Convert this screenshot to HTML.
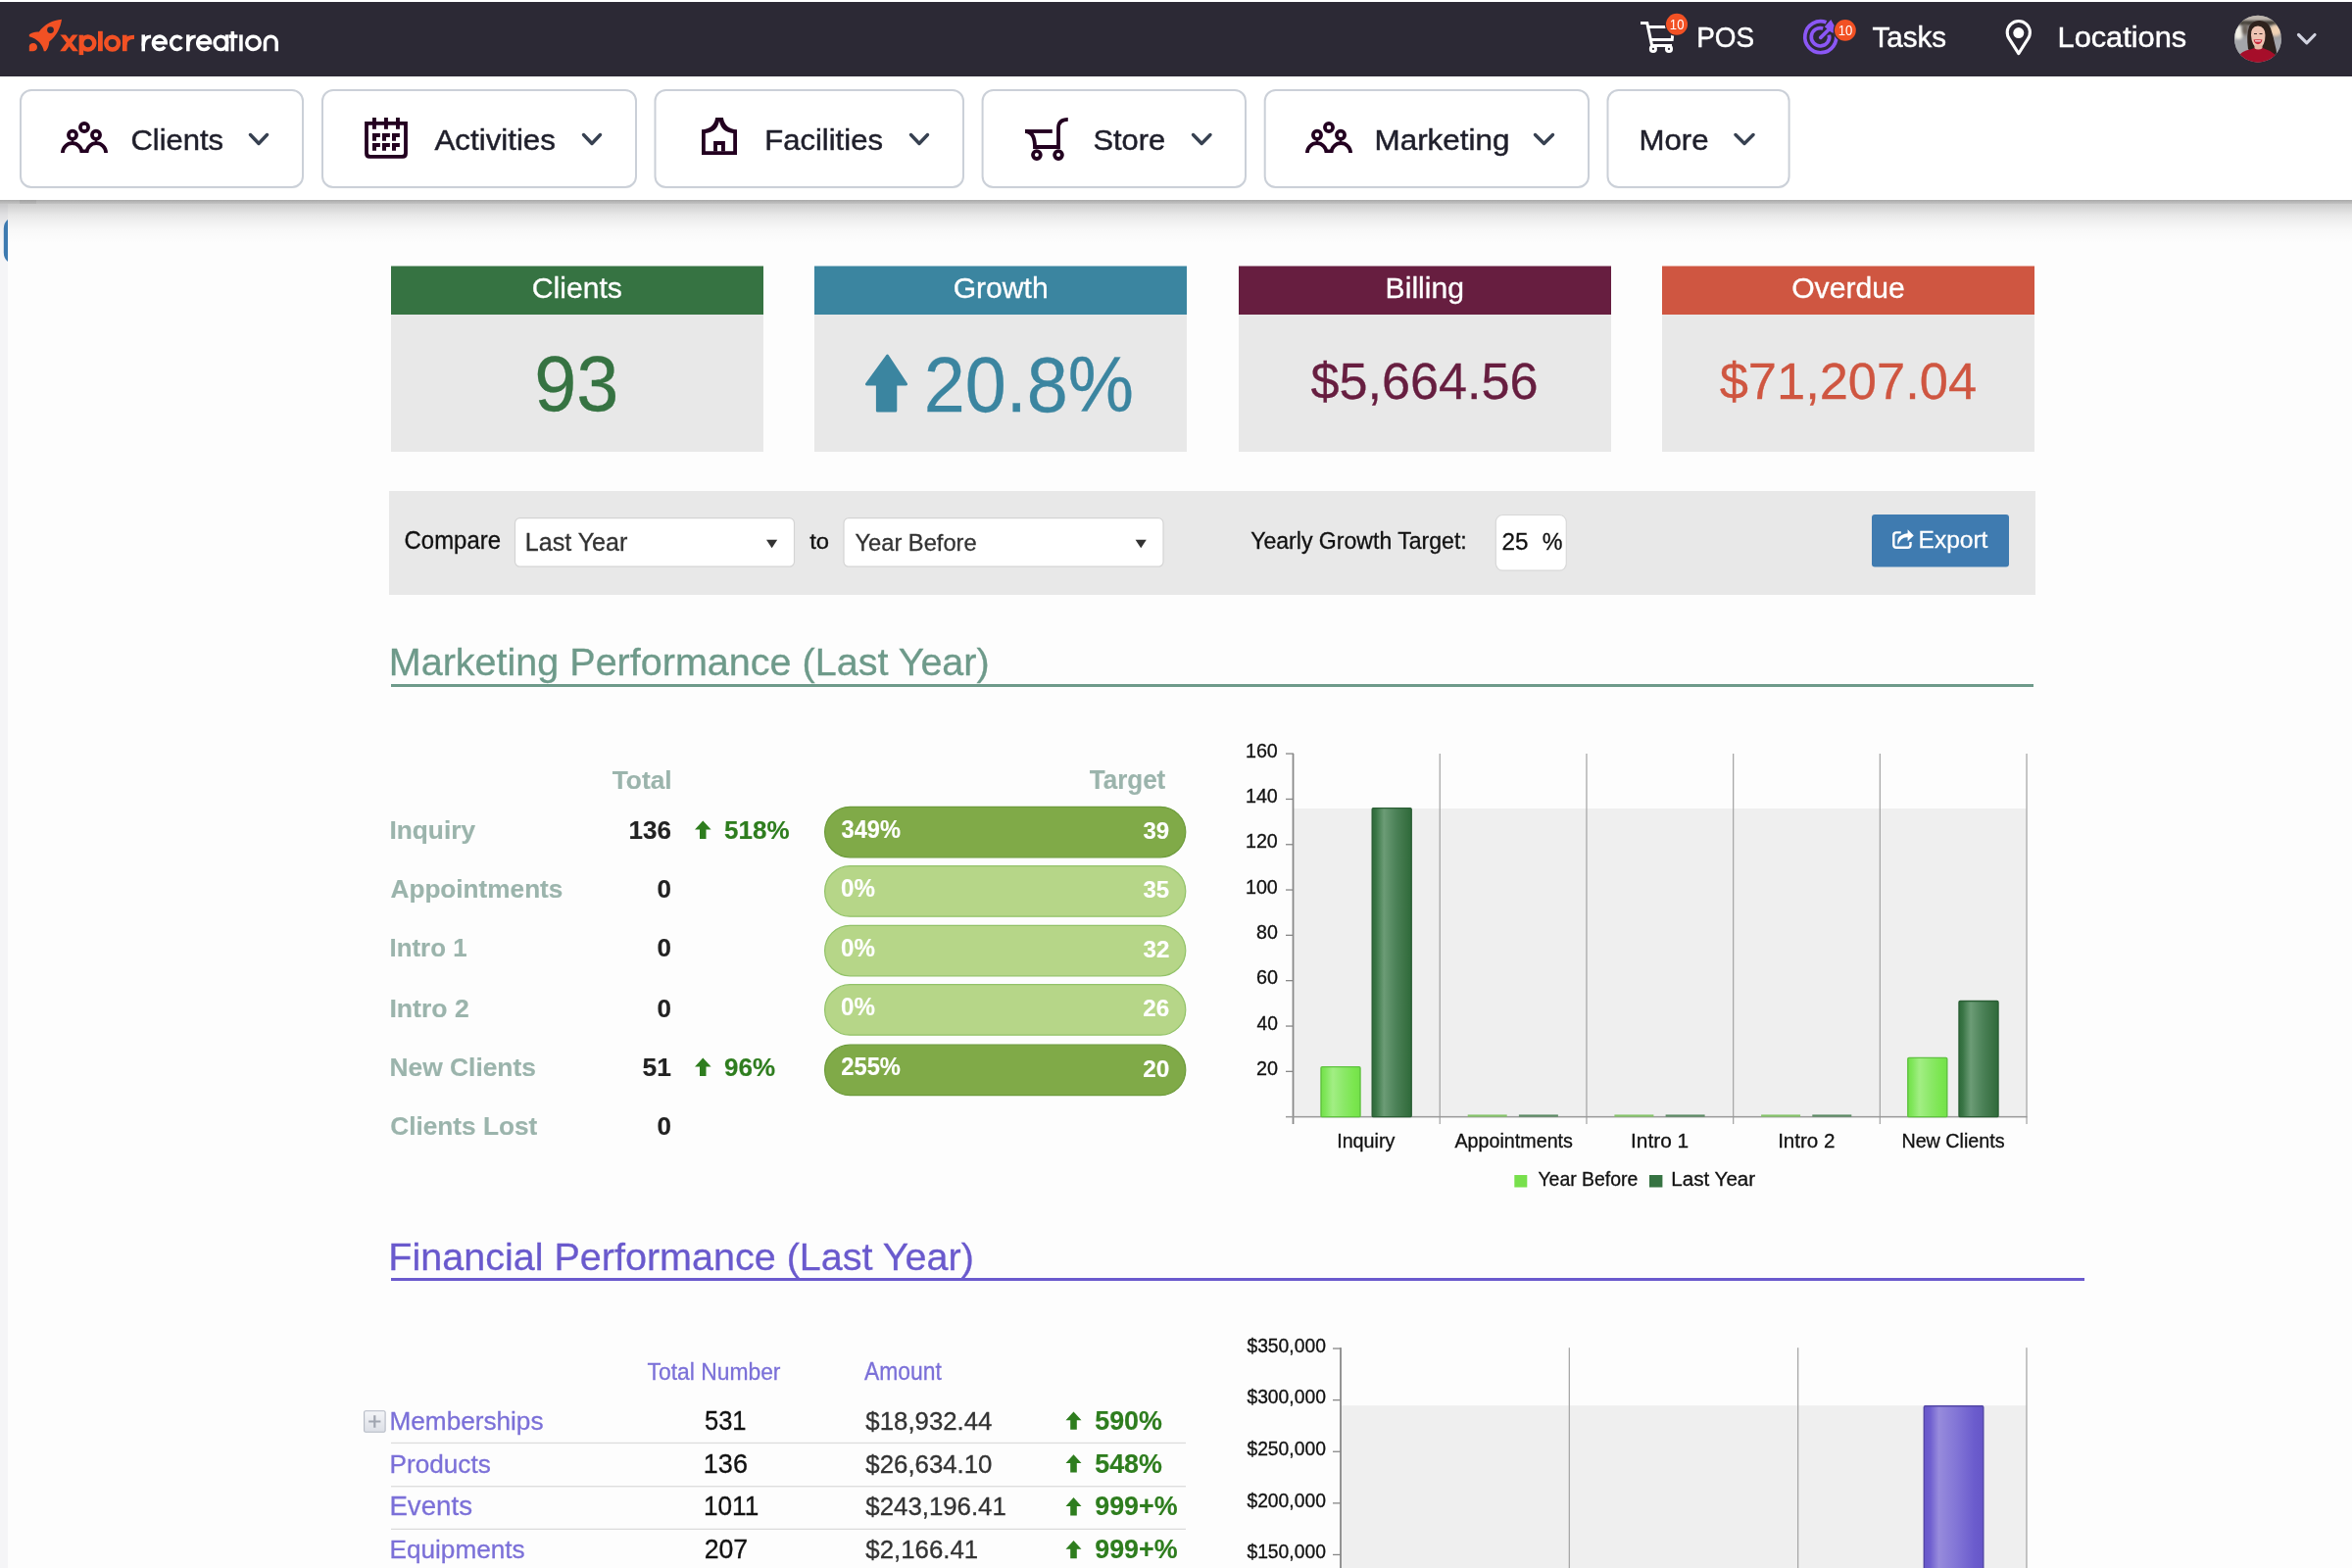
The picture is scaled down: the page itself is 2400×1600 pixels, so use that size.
<!DOCTYPE html>
<html><head><meta charset='utf-8'><title>Xplor Recreation Dashboard</title>
<style>html,body{margin:0;padding:0;width:2400px;height:1600px;overflow:hidden;background:#fdfdfd;font-family:"Liberation Sans",sans-serif}</style>
</head><body>
<svg width='2400' height='1600' viewBox='0 0 2400 1600' style='position:absolute;left:0;top:0;display:block;will-change:transform'><defs>
<linearGradient id='shadowTop' x1='0' y1='0' x2='0' y2='1'><stop offset='0' stop-color='#000' stop-opacity='0.19'/><stop offset='0.3' stop-color='#000' stop-opacity='0.08'/><stop offset='0.65' stop-color='#000' stop-opacity='0.02'/><stop offset='1' stop-color='#000' stop-opacity='0'/></linearGradient><linearGradient id='gLine' x1='0' y1='0' x2='0' y2='1'><stop offset='0' stop-color='#a9a9a9'/><stop offset='1' stop-color='#c2c2c2'/></linearGradient>
<linearGradient id='gLight' x1='0' y1='0' x2='1' y2='0'><stop offset='0' stop-color='#74e04a'/><stop offset='0.1' stop-color='#7ee658'/><stop offset='0.3' stop-color='#a2ee84'/><stop offset='0.6' stop-color='#8ae866'/><stop offset='0.85' stop-color='#7ae64e'/><stop offset='1' stop-color='#74e04a'/></linearGradient>
<linearGradient id='gDark' x1='0' y1='0' x2='1' y2='0'><stop offset='0' stop-color='#2e6a3a'/><stop offset='0.1' stop-color='#3a7646'/><stop offset='0.3' stop-color='#6c9c76'/><stop offset='0.6' stop-color='#4c8258'/><stop offset='0.85' stop-color='#3a7244'/><stop offset='1' stop-color='#2e6a3a'/></linearGradient>
<linearGradient id='gPurple' x1='0' y1='0' x2='1' y2='0'><stop offset='0' stop-color='#6656c8'/><stop offset='0.1' stop-color='#6e5ecf'/><stop offset='0.25' stop-color='#978bdc'/><stop offset='0.55' stop-color='#8275d6'/><stop offset='0.85' stop-color='#6b5ccd'/><stop offset='1' stop-color='#6656c8'/></linearGradient>
<linearGradient id='gExp' x1='0' y1='0' x2='0' y2='1'><stop offset='0' stop-color='#f4f5f8'/><stop offset='1' stop-color='#dcdfe6'/></linearGradient>
<clipPath id='avClip'><circle cx='2304' cy='39.7' r='24'/></clipPath>
<filter id='blur2'><feGaussianBlur stdDeviation='2'/></filter><filter id='blur1' x='-50%' y='-50%' width='200%' height='200%'><feGaussianBlur stdDeviation='1'/></filter><filter id='blur15' x='-50%' y='-50%' width='200%' height='200%'><feGaussianBlur stdDeviation='1.6'/></filter><filter id='blur05' x='-20%' y='-20%' width='140%' height='140%'><feGaussianBlur stdDeviation='0.5'/></filter>
</defs>
<rect x='0' y='0' width='2400' height='1600' fill='#fdfdfd'/>
<rect x='0' y='0' width='2400' height='204' fill='#ffffff'/>
<rect x='0' y='208' width='8' height='1392' fill='#f5f5f7'/>
<rect x='0' y='208' width='2400' height='40' fill='url(#shadowTop)'/>
<rect x='0' y='204' width='2400' height='4' fill='url(#gLine)'/>
<rect x='20' y='204' width='17' height='4' fill='#000' opacity='0.05'/>
<path d='M8,224 L8,267 Q4,264 3.8,258 L3.8,233 Q4,227 8,224 Z' fill='#3d7ab0'/>
<rect x='0' y='2' width='2400' height='76' fill='#2c2935'/>
<path fill='#f25124' fill-rule='evenodd' d='M63,19.8 C62,28 57.5,37 50.3,42.6 C50,47 48.5,50.5 46.6,52.2 L44.8,52.2 C44,46 38,39 29.8,37.2 L29.8,35.2 C33,33 36,32.3 39.8,32.6 C45,25 54,20.5 63,19.8 Z M51.5,27.2 A3.4,3.4 0 1 0 51.5,34 A3.4,3.4 0 1 0 51.5,27.2 Z'/>
<path fill='#f25124' d='M29.8,52.2 V47.5 C29.8,45.5 31.6,44.1 34,44.1 C36.3,44.1 38,45.9 38,48.1 C38,50.5 36.3,52.2 34,52.2 Z'/>
<clipPath id='xclip'><rect x='60' y='35.6' width='22' height='16.6'/></clipPath><g clip-path='url(#xclip)' stroke='#f25124' stroke-width='4.5'><path d='M62.5,33 L79,54.8 M78.6,33 L62.1,54.8'/></g><rect x='80.6' y='35.7' width='4.6' height='20.4' fill='#f25124'/><circle cx='89.75' cy='44.05' r='6.55' fill='none' stroke='#f25124' stroke-width='4.5'/><rect x='100' y='31.8' width='4.8' height='20.4' fill='#f25124'/><circle cx='114.65' cy='44.05' r='6.35' fill='none' stroke='#f25124' stroke-width='4.5'/><rect x='124.9' y='35.7' width='4.7' height='16.5' fill='#f25124'/><path d='M127.25,46 Q127.4,37.9 137,37.9' fill='none' stroke='#f25124' stroke-width='4.3'/>
<rect x='144.5' y='35.4' width='3.5' height='16.9' fill='#ffffff'/><path d='M146.25,46.5 Q146.45,37.15 154.10,37.15' fill='none' stroke='#ffffff' stroke-width='3.5'/><path d='M156.45,43.85 H169.25 A6.4,6.7 0 1 0 168.03,47.79' fill='none' stroke='#ffffff' stroke-width='3.5'/><path d='M185.37,39.73 A6.05,6.7 0 1 0 185.37,47.97' fill='none' stroke='#ffffff' stroke-width='3.5'/><rect x='190.1' y='35.4' width='3.5' height='16.9' fill='#ffffff'/><path d='M191.85,46.5 Q192.05,37.15 199.70,37.15' fill='none' stroke='#ffffff' stroke-width='3.5'/><path d='M201.75,43.85 H214.55 A6.4,6.7 0 1 0 213.33,47.79' fill='none' stroke='#ffffff' stroke-width='3.5'/><ellipse cx='225.3' cy='43.85' rx='6.25' ry='6.7' fill='none' stroke='#ffffff' stroke-width='3.5'/><rect x='229.8' y='35.4' width='3.5' height='16.9' fill='#ffffff'/><rect x='235.6' y='31.9' width='3.5' height='20.4' fill='#ffffff'/><rect x='233.6' y='35.4' width='8.9' height='3.5' fill='#ffffff'/><rect x='244.2' y='35.4' width='3.5' height='16.9' fill='#ffffff'/><ellipse cx='258.5' cy='43.85' rx='6.75' ry='6.7' fill='none' stroke='#ffffff' stroke-width='3.5'/><path d='M270.45,52.3 V43.05 A5.9,5.9 0 0 1 282.25,43.05 V52.3' fill='none' stroke='#ffffff' stroke-width='3.5'/>
<g fill='none' stroke='#ffffff' stroke-width='3' stroke-linejoin='miter'><path d='M1674,23.5 H1680.8 L1685.6,46.4 H1706'/><path d='M1682,27.5 H1707.6 L1706.2,40.4 H1684.4'/><circle cx='1686.9' cy='49.9' r='2.6' stroke-width='2.9'/><circle cx='1703' cy='49.9' r='2.6' stroke-width='2.9'/></g>
<circle cx='1711' cy='24.8' r='12.2' fill='#2c2935'/>
<circle cx='1711' cy='24.8' r='11' fill='#f25124'/>
<text transform='translate(1703.85,29.80) scale(0.9575,1)' font-family='Liberation Sans' font-weight='400' font-size='13.71' fill='#ffffff' stroke='none'>10</text>
<text transform='translate(1731.27,48.30) scale(0.9617,1)' font-family='Liberation Sans' font-weight='400' font-size='29.00' fill='#ffffff' stroke='#ffffff' stroke-width='0.45'>POS</text>
<g fill='none' stroke='#8b57f5' stroke-width='3.7'><path d='M1863.5,22.8 A16,16 0 1 0 1873.2,33.5'/><path d='M1860.2,29 A9.2,9.2 0 1 0 1866.4,35.6'/></g>
<path d='M1857.8,38.4 L1866.5,29.8' stroke='#8b57f5' stroke-width='3.7' stroke-linecap='round'/>
<path d='M1861.8,27.2 L1868.3,20 L1871.5,25.8 L1877,27 L1870.5,33.8 L1868,32.6 Z' fill='#8b57f5'/>
<circle cx='1882.9' cy='30.9' r='12.2' fill='#2c2935'/>
<circle cx='1882.9' cy='30.9' r='10.9' fill='#f25124'/>
<text transform='translate(1875.75,35.90) scale(0.9575,1)' font-family='Liberation Sans' font-weight='400' font-size='13.71' fill='#ffffff' stroke='none'>10</text>
<text transform='translate(1910.41,48.30) scale(1.0207,1)' font-family='Liberation Sans' font-weight='400' font-size='29.00' fill='#ffffff' stroke='#ffffff' stroke-width='0.45'>Tasks</text>
<path d='M2059.8,54.6 L2050.6,40.2 A11.6,11.6 0 1 1 2069,40.2 Z' fill='none' stroke='#ffffff' stroke-width='3.1' stroke-linejoin='round'/>
<circle cx='2059.8' cy='33.6' r='5.5' fill='#ffffff'/>
<text transform='translate(2099.54,48.30) scale(1.0610,1)' font-family='Liberation Sans' font-weight='400' font-size='29.00' fill='#ffffff' stroke='#ffffff' stroke-width='0.45'>Locations</text>
<g clip-path='url(#avClip)'><rect x='2278' y='14' width='52' height='52' fill='#9c9c9e'/><rect x='2278' y='14' width='52' height='8' fill='#bdb5ad'/><rect x='2278' y='21' width='52' height='5' fill='#4a443c' filter='url(#blur1)'/><ellipse cx='2284' cy='34' rx='4.5' ry='9' fill='#f2efe6' filter='url(#blur15)'/><ellipse cx='2291' cy='30' rx='3' ry='6' fill='#6a6258' filter='url(#blur15)'/><ellipse cx='2322' cy='31' rx='6' ry='6' fill='#f0d2b4' filter='url(#blur15)'/><rect x='2278' y='40' width='52' height='20' fill='#a4a6aa' filter='url(#blur15)'/><path d='M2294,50 Q2292,36 2295,27 Q2299,20.5 2306,21 Q2314,21.5 2317,29 Q2320,38 2322,48 Q2324,55 2322,58 L2312,58 L2296,52 Z' fill='#2e201d' filter='url(#blur05)'/><path d='M2297,36 Q2296.5,27 2304,26.5 Q2311.5,27 2311.5,36 Q2311.5,47 2304.5,50 Q2297.5,47 2297,36 Z' fill='#efc4b2'/><rect x='2300.5' y='46' width='8' height='6' fill='#e8b8a4'/><path d='M2299.5,40.5 Q2304,40 2308.5,40.5 Q2307.5,45 2304,45.2 Q2300.5,45 2299.5,40.5 Z' fill='#c8283a'/><path d='M2300.8,41.2 H2307.2 L2306.6,42.6 H2301.4 Z' fill='#f4ecec'/><path d='M2300,34.5 h3 M2305.5,34.5 h3' stroke='#3a2a26' stroke-width='1.1'/><path d='M2281,66 Q2282,55 2292,51.5 Q2298,50 2300,49 Q2304,52 2309,49 Q2316,51 2322,56 L2330,66 Z' fill='#a60e2a'/></g>
<path d='M2345.5,35.5 L2353.8,43.8 L2362,35.5' fill='none' stroke='#d2d3e0' stroke-width='3.2' stroke-linecap='round' stroke-linejoin='round'/>
<rect x='20.5' y='93.5' width='289.0' height='99' rx='11' fill='#000' opacity='0.03'/>
<rect x='21.0' y='92' width='288.0' height='99' rx='11' fill='#ffffff' stroke='#cbd0d8' stroke-width='2'/>
<rect x='328.5' y='93.5' width='321.0' height='99' rx='11' fill='#000' opacity='0.03'/>
<rect x='329.0' y='92' width='320.0' height='99' rx='11' fill='#ffffff' stroke='#cbd0d8' stroke-width='2'/>
<rect x='668.0' y='93.5' width='315.5' height='99' rx='11' fill='#000' opacity='0.03'/>
<rect x='668.5' y='92' width='314.5' height='99' rx='11' fill='#ffffff' stroke='#cbd0d8' stroke-width='2'/>
<rect x='1002.1' y='93.5' width='269.4' height='99' rx='11' fill='#000' opacity='0.03'/>
<rect x='1002.6' y='92' width='268.4' height='99' rx='11' fill='#ffffff' stroke='#cbd0d8' stroke-width='2'/>
<rect x='1290.2' y='93.5' width='331.3' height='99' rx='11' fill='#000' opacity='0.03'/>
<rect x='1290.7' y='92' width='330.3' height='99' rx='11' fill='#ffffff' stroke='#cbd0d8' stroke-width='2'/>
<rect x='1640.0' y='93.5' width='186.1' height='99' rx='11' fill='#000' opacity='0.03'/>
<rect x='1640.5' y='92' width='185.1' height='99' rx='11' fill='#ffffff' stroke='#cbd0d8' stroke-width='2'/>
<g fill='none' stroke='#230020' stroke-width='3.7'><circle cx='86' cy='130' r='4.1'/><circle cx='74' cy='137.7' r='4.1'/><circle cx='98' cy='137.7' r='4.1'/><path d='M63.9,156 A9.8,9.8 0 0 1 83.5,156'/><path d='M88.5,156 A9.8,9.8 0 0 1 108.1,156'/><path d='M74,141.5 V146' stroke-width='2.4'/><path d='M98,141.5 V146' stroke-width='2.4'/></g><rect x='83.5' y='152.5' width='5' height='3.5' fill='#230020'/>
<text transform='translate(133.45,152.50) scale(1.0608,1)' font-family='Liberation Sans' font-weight='400' font-size='29.20' fill='#1f1f2b' stroke='#1f1f2b' stroke-width='0.45'>Clients</text>
<path d='M255.5,137.5 L264.0,146.5 L272.5,137.5' fill='none' stroke='#374151' stroke-width='3.4' stroke-linecap='round' stroke-linejoin='round'/>
<g fill='#230020'><path fill-rule='evenodd' d='M372.1,124 H415.9 V156.8 Q415.9,161.8 410.9,161.8 H377.1 Q372.1,161.8 372.1,156.8 Z M375.9,127.8 V156 Q375.9,158 377.9,158 H410.1 Q412.1,158 412.1,156 V127.8 Z'/><rect x='380' y='120' width='3.9' height='11.8'/><rect x='392' y='120' width='3.9' height='11.8'/><rect x='404' y='120' width='3.9' height='11.8'/>
<path d='M380,136.1 H387.9 V139.9 H384 V143.79999999999998 H380 Z'/>
<path d='M390,136.1 H397.9 V139.9 H394 V143.79999999999998 H390 Z'/>
<path d='M400,136.1 H407.9 V139.9 H404 V143.79999999999998 H400 Z'/>
<path d='M380,146.1 H387.9 V149.9 H384 V153.79999999999998 H380 Z'/>
<path d='M390,146.1 H397.9 V149.9 H394 V153.79999999999998 H390 Z'/>
<path d='M400,146.1 H407.9 V149.9 H404 V153.79999999999998 H400 Z'/>
</g>
<text transform='translate(443.50,152.50) scale(1.0712,1)' font-family='Liberation Sans' font-weight='400' font-size='29.20' fill='#1f1f2b' stroke='#1f1f2b' stroke-width='0.45'>Activities</text>
<path d='M595.5,137.5 L604.0,146.5 L612.5,137.5' fill='none' stroke='#374151' stroke-width='3.4' stroke-linecap='round' stroke-linejoin='round'/>
<path fill-rule='evenodd' fill='#230020' d='M716,158 V132.2 Q728.3,131.8 730.2,120 H737.9 Q739.8,131.8 752,132.2 V158 Z M719.8,154.2 V135.9 Q731.6,135.4 733.95,123.6 Q736.4,135.4 748.2,135.9 V154.2 Z'/>
<path fill='#230020' d='M728.1,154.5 V144 H739.9 V154.5 H736 V148 H732 V154.5 Z'/>
<text transform='translate(780.22,152.50) scale(1.0628,1)' font-family='Liberation Sans' font-weight='400' font-size='29.20' fill='#1f1f2b' stroke='#1f1f2b' stroke-width='0.45'>Facilities</text>
<path d='M929.5,137.5 L938.0,146.5 L946.5,137.5' fill='none' stroke='#374151' stroke-width='3.4' stroke-linecap='round' stroke-linejoin='round'/>
<g fill='none' stroke='#230020' stroke-width='3.8'><path d='M1046,134 H1073.8'/><path d='M1046,134 Q1056,134 1056,150 H1080 V130.6 Q1080,122 1089.8,121.9'/><circle cx='1057.9' cy='158.1' r='3.9'/><circle cx='1080' cy='158.1' r='3.9'/></g>
<text transform='translate(1115.46,152.50) scale(1.0572,1)' font-family='Liberation Sans' font-weight='400' font-size='29.20' fill='#1f1f2b' stroke='#1f1f2b' stroke-width='0.45'>Store</text>
<path d='M1217.5,137.5 L1226.2,146.5 L1235.0,137.5' fill='none' stroke='#374151' stroke-width='3.4' stroke-linecap='round' stroke-linejoin='round'/>
<g fill='none' stroke='#230020' stroke-width='3.7'><circle cx='1356' cy='130' r='4.1'/><circle cx='1344' cy='137.7' r='4.1'/><circle cx='1368' cy='137.7' r='4.1'/><path d='M1333.9,156 A9.8,9.8 0 0 1 1353.5,156'/><path d='M1358.5,156 A9.8,9.8 0 0 1 1378.1,156'/><path d='M1344,141.5 V146' stroke-width='2.4'/><path d='M1368,141.5 V146' stroke-width='2.4'/></g><rect x='1353.5' y='152.5' width='5' height='3.5' fill='#230020'/>
<text transform='translate(1402.49,152.50) scale(1.0766,1)' font-family='Liberation Sans' font-weight='400' font-size='29.20' fill='#1f1f2b' stroke='#1f1f2b' stroke-width='0.45'>Marketing</text>
<path d='M1566.5,137.5 L1575.5,146.5 L1584.5,137.5' fill='none' stroke='#374151' stroke-width='3.4' stroke-linecap='round' stroke-linejoin='round'/>
<text transform='translate(1672.50,152.50) scale(1.0686,1)' font-family='Liberation Sans' font-weight='400' font-size='29.20' fill='#1f1f2b' stroke='#1f1f2b' stroke-width='0.45'>More</text>
<path d='M1771.0,137.5 L1780.0,146.5 L1789.0,137.5' fill='none' stroke='#374151' stroke-width='3.4' stroke-linecap='round' stroke-linejoin='round'/>
<rect x='399' y='321' width='380' height='140' fill='#e8e8e8'/>
<rect x='399' y='271.5' width='380' height='49.5' fill='#367342'/>
<text transform='translate(542.74,304.40) scale(1.0000,1)' font-family='Liberation Sans' font-weight='400' font-size='30.14' fill='#ffffff' stroke='#ffffff' stroke-width='0.3'>Clients</text>
<rect x='831' y='321' width='380' height='140' fill='#e8e8e8'/>
<rect x='831' y='271.5' width='380' height='49.5' fill='#3b85a0'/>
<text transform='translate(972.63,304.40) scale(1.0000,1)' font-family='Liberation Sans' font-weight='400' font-size='30.14' fill='#ffffff' stroke='#ffffff' stroke-width='0.3'>Growth</text>
<rect x='1264' y='321' width='380' height='140' fill='#e8e8e8'/>
<rect x='1264' y='271.5' width='380' height='49.5' fill='#671e40'/>
<text transform='translate(1413.62,304.40) scale(1.0000,1)' font-family='Liberation Sans' font-weight='400' font-size='30.14' fill='#ffffff' stroke='#ffffff' stroke-width='0.3'>Billing</text>
<rect x='1696' y='321' width='380' height='140' fill='#e8e8e8'/>
<rect x='1696' y='271.5' width='380' height='49.5' fill='#cf5641'/>
<text transform='translate(1828.14,304.40) scale(1.0000,1)' font-family='Liberation Sans' font-weight='400' font-size='30.14' fill='#ffffff' stroke='#ffffff' stroke-width='0.3'>Overdue</text>
<text transform='translate(545.13,418.50) scale(0.9716,1)' font-family='Liberation Sans' font-weight='400' font-size='79.71' fill='#367342' stroke='#367342' stroke-width='0.3'>93</text>
<path d='M904.5,362 Q905.5,361 906.5,362 L926,391.5 Q926.5,393.6 924.5,393.6 L915.3,393.6 V419 Q915.3,420.6 913.7,420.6 H895.5 Q893.9,420.6 893.9,419 V393.6 L884.5,393.6 Q882.5,393.6 883,391.5 Z' fill='#3b85a0'/>
<text transform='translate(942.72,420.10) scale(0.9578,1)' font-family='Liberation Sans' font-weight='400' font-size='78.86' fill='#3b85a0' stroke='#3b85a0' stroke-width='0.3'>20.8%</text>
<text transform='translate(1337.38,406.90) scale(0.9957,1)' font-family='Liberation Sans' font-weight='400' font-size='52.43' fill='#671e40' stroke='#671e40' stroke-width='0.3'>$5,664.56</text>
<text transform='translate(1754.68,406.90) scale(1.0000,1)' font-family='Liberation Sans' font-weight='400' font-size='52.43' fill='#cf5641' stroke='#cf5641' stroke-width='0.3'>$71,207.04</text>
<rect x='397' y='501' width='1680' height='106' fill='#e8e8e8'/>
<text transform='translate(412.60,560.30) scale(0.9518,1)' font-family='Liberation Sans' font-weight='400' font-size='25.14' fill='#111111' stroke='#111111' stroke-width='0.3'>Compare</text>
<rect x='525.5' y='528.7' width='285' height='49.5' rx='5' fill='#ffffff' stroke='#d4d4d4' stroke-width='1.2'/>
<text transform='translate(535.79,561.80) scale(1.0000,1)' font-family='Liberation Sans' font-weight='400' font-size='25.07' fill='#333333' stroke='#333333' stroke-width='0.3'>Last Year</text>
<path d='M782,550.8 H793.2 L787.6,559.3 Z' fill='#333'/>
<text transform='translate(826.16,560.30) scale(1.0473,1)' font-family='Liberation Sans' font-weight='400' font-size='22.77' fill='#111111' stroke='#111111' stroke-width='0.3'>to</text>
<rect x='861' y='528.7' width='326' height='49.5' rx='5' fill='#ffffff' stroke='#d4d4d4' stroke-width='1.2'/>
<text transform='translate(872.43,561.80) scale(1.0000,1)' font-family='Liberation Sans' font-weight='400' font-size='23.70' fill='#333333' stroke='#333333' stroke-width='0.3'>Year Before</text>
<path d='M1158.6,550.8 H1169.8 L1164.2,559.3 Z' fill='#333'/>
<text transform='translate(1276.14,560.20) scale(0.9800,1)' font-family='Liberation Sans' font-weight='400' font-size='23.56' fill='#111111' stroke='#111111' stroke-width='0.3'>Yearly Growth Target:</text>
<rect x='1526.3' y='525.5' width='72' height='56.6' rx='7' fill='#ffffff' stroke='#d8d8d8' stroke-width='1.2'/>
<text transform='translate(1532.39,560.50) scale(1.0000,1)' font-family='Liberation Sans' font-weight='400' font-size='24.29' fill='#111111' stroke='#111111' stroke-width='0.3'>25</text>
<text transform='translate(1573.80,560.50) scale(0.9454,1)' font-family='Liberation Sans' font-weight='400' font-size='24.64' fill='#111111' stroke='#111111' stroke-width='0.3'>%</text>
<rect x='1910' y='525.1' width='140' height='53.4' rx='3' fill='#3f7bb0'/>
<text transform='translate(1957.54,559.10) scale(1.0018,1)' font-family='Liberation Sans' font-weight='400' font-size='24.49' fill='#ffffff' stroke='#ffffff' stroke-width='0.3'>Export</text>
<g fill='none' stroke='#ffffff' stroke-width='2.4'><path d='M1939.8,543.4 H1935.2 Q1932.3,543.4 1932.3,546.3 V555.9 Q1932.3,558.8 1935.2,558.8 H1946.6 Q1949.5,558.8 1949.5,555.9 V553'/></g>
<path d='M1936.8,556.3 Q1933.8,546 1946.6,544.3 V540.3 L1952.8,546.4 L1946.6,552.2 V548.3 Q1939.5,547.8 1936.8,556.3 Z' fill='#ffffff'/>
<text transform='translate(396.74,688.80) scale(1.0233,1)' font-family='Liberation Sans' font-weight='400' font-size='38.63' fill='#6e9a8a' stroke='#6e9a8a' stroke-width='0.3'>Marketing Performance (Last Year)</text>
<rect x='399' y='698' width='1676' height='3' fill='#6e9a8a'/>
<text transform='translate(624.74,804.70) scale(1.0282,1)' font-family='Liberation Sans' font-weight='700' font-size='25.62' fill='#9bb4ac' stroke='#9bb4ac' stroke-width='0.15'>Total</text>
<text transform='translate(1111.74,805.00) scale(0.9447,1)' font-family='Liberation Sans' font-weight='700' font-size='27.54' fill='#9bb4ac' stroke='#9bb4ac' stroke-width='0.15'>Target</text>
<text transform='translate(397.46,855.90) scale(1.0544,1)' font-family='Liberation Sans' font-weight='700' font-size='24.93' fill='#9bb4ac' stroke='#9bb4ac' stroke-width='0.15'>Inquiry</text>
<text transform='translate(641.62,855.90) scale(1.0000,1)' font-family='Liberation Sans' font-weight='700' font-size='26.00' fill='#222222' stroke='#222222' stroke-width='0.15'>136</text>
<path d='M717.3,837.4 L725.6,846.4 H720.5 V855.9 H714 V846.4 H709 Z' fill='#2e7d1e'/>
<text transform='translate(739.02,855.90) scale(1.0000,1)' font-family='Liberation Sans' font-weight='700' font-size='26.00' fill='#2e7d1e' stroke='#2e7d1e' stroke-width='0.15'>518%</text>
<text transform='translate(398.51,916.00) scale(1.0501,1)' font-family='Liberation Sans' font-weight='700' font-size='24.93' fill='#9bb4ac' stroke='#9bb4ac' stroke-width='0.15'>Appointments</text>
<text transform='translate(670.48,916.00) scale(1.0000,1)' font-family='Liberation Sans' font-weight='700' font-size='26.00' fill='#222222' stroke='#222222' stroke-width='0.15'>0</text>
<text transform='translate(397.49,976.40) scale(0.9811,1)' font-family='Liberation Sans' font-weight='700' font-size='26.38' fill='#9bb4ac' stroke='#9bb4ac' stroke-width='0.15'>Intro 1</text>
<text transform='translate(670.48,976.40) scale(1.0000,1)' font-family='Liberation Sans' font-weight='700' font-size='26.00' fill='#222222' stroke='#222222' stroke-width='0.15'>0</text>
<text transform='translate(397.44,1037.80) scale(1.0235,1)' font-family='Liberation Sans' font-weight='700' font-size='26.00' fill='#9bb4ac' stroke='#9bb4ac' stroke-width='0.15'>Intro 2</text>
<text transform='translate(670.48,1037.80) scale(1.0000,1)' font-family='Liberation Sans' font-weight='700' font-size='26.00' fill='#222222' stroke='#222222' stroke-width='0.15'>0</text>
<text transform='translate(397.45,1098.00) scale(1.0583,1)' font-family='Liberation Sans' font-weight='700' font-size='24.93' fill='#9bb4ac' stroke='#9bb4ac' stroke-width='0.15'>New Clients</text>
<text transform='translate(655.51,1098.00) scale(1.0000,1)' font-family='Liberation Sans' font-weight='700' font-size='26.38' fill='#222222' stroke='#222222' stroke-width='0.15'>51</text>
<path d='M717.3,1079.5 L725.6,1088.5 H720.5 V1098 H714 V1088.5 H709 Z' fill='#2e7d1e'/>
<text transform='translate(739.02,1098.00) scale(1.0000,1)' font-family='Liberation Sans' font-weight='700' font-size='26.00' fill='#2e7d1e' stroke='#2e7d1e' stroke-width='0.15'>96%</text>
<text transform='translate(398.25,1158.30) scale(1.0519,1)' font-family='Liberation Sans' font-weight='700' font-size='24.93' fill='#9bb4ac' stroke='#9bb4ac' stroke-width='0.15'>Clients Lost</text>
<text transform='translate(670.48,1158.30) scale(1.0000,1)' font-family='Liberation Sans' font-weight='700' font-size='26.00' fill='#222222' stroke='#222222' stroke-width='0.15'>0</text>
<rect x='841.6' y='823.3' width='368.2' height='51.5' rx='25.7' fill='#80aa48' stroke='#6c9b3a' stroke-width='1.2'/>
<text transform='translate(858.53,854.50) scale(0.9239,1)' font-family='Liberation Sans' font-weight='700' font-size='25.57' fill='#ffffff' stroke='#ffffff' stroke-width='0.15'>349%</text>
<text transform='translate(1166.52,855.80) scale(1.0291,1)' font-family='Liberation Sans' font-weight='700' font-size='23.29' fill='#ffffff' stroke='#ffffff' stroke-width='0.15'>39</text>
<rect x='841.6' y='883.7' width='368.2' height='51.5' rx='25.7' fill='#b6d688' stroke='#92c268' stroke-width='1.2'/>
<text transform='translate(858.03,914.90) scale(0.9436,1)' font-family='Liberation Sans' font-weight='700' font-size='25.57' fill='#ffffff' stroke='#ffffff' stroke-width='0.15'>0%</text>
<text transform='translate(1166.52,916.20) scale(1.0291,1)' font-family='Liberation Sans' font-weight='700' font-size='23.29' fill='#ffffff' stroke='#ffffff' stroke-width='0.15'>35</text>
<rect x='841.6' y='944.3' width='368.2' height='51.5' rx='25.7' fill='#b6d688' stroke='#92c268' stroke-width='1.2'/>
<text transform='translate(858.03,975.50) scale(0.9436,1)' font-family='Liberation Sans' font-weight='700' font-size='25.57' fill='#ffffff' stroke='#ffffff' stroke-width='0.15'>0%</text>
<text transform='translate(1166.52,976.80) scale(1.0389,1)' font-family='Liberation Sans' font-weight='700' font-size='23.29' fill='#ffffff' stroke='#ffffff' stroke-width='0.15'>32</text>
<rect x='841.6' y='1004.7' width='368.2' height='51.5' rx='25.7' fill='#b6d688' stroke='#92c268' stroke-width='1.2'/>
<text transform='translate(858.03,1035.90) scale(0.9436,1)' font-family='Liberation Sans' font-weight='700' font-size='25.57' fill='#ffffff' stroke='#ffffff' stroke-width='0.15'>0%</text>
<text transform='translate(1166.27,1037.20) scale(1.0389,1)' font-family='Liberation Sans' font-weight='700' font-size='23.29' fill='#ffffff' stroke='#ffffff' stroke-width='0.15'>26</text>
<rect x='841.6' y='1066.2' width='368.2' height='51.5' rx='25.7' fill='#80aa48' stroke='#6c9b3a' stroke-width='1.2'/>
<text transform='translate(858.29,1097.40) scale(0.9276,1)' font-family='Liberation Sans' font-weight='700' font-size='25.57' fill='#ffffff' stroke='#ffffff' stroke-width='0.15'>255%</text>
<text transform='translate(1166.27,1098.70) scale(1.0488,1)' font-family='Liberation Sans' font-weight='700' font-size='23.29' fill='#ffffff' stroke='#ffffff' stroke-width='0.15'>20</text>
<rect x='1319.5' y='825' width='748.5' height='314.6' fill='#efefef'/>
<rect x='1318.9' y='769' width='1.3' height='378' fill='#a8a8a8'/>
<rect x='1468.6' y='769' width='1.3' height='378' fill='#a8a8a8'/>
<rect x='1618.3' y='769' width='1.3' height='378' fill='#a8a8a8'/>
<rect x='1768.0' y='769' width='1.3' height='378' fill='#a8a8a8'/>
<rect x='1917.7' y='769' width='1.3' height='378' fill='#a8a8a8'/>
<rect x='2067.4' y='769' width='1.3' height='378' fill='#a8a8a8'/>
<rect x='1318.7' y='769' width='1.6' height='378' fill='#888888'/>
<rect x='1312' y='1138.8999999999999' width='756.5' height='1.5' fill='#999999'/>
<rect x='1312' y='1092.7' width='8' height='1.3' fill='#888888'/>
<text transform='translate(1281.91,1097.08) scale(0.9694,1)' font-family='Liberation Sans' font-weight='400' font-size='20.43' fill='#111111' stroke='#111111' stroke-width='0.3'>20</text>
<rect x='1312' y='1046.4' width='8' height='1.3' fill='#888888'/>
<text transform='translate(1282.52,1050.76) scale(0.9417,1)' font-family='Liberation Sans' font-weight='400' font-size='20.43' fill='#111111' stroke='#111111' stroke-width='0.3'>40</text>
<rect x='1312' y='1000.0' width='8' height='1.3' fill='#888888'/>
<text transform='translate(1281.91,1004.44) scale(0.9694,1)' font-family='Liberation Sans' font-weight='400' font-size='20.43' fill='#111111' stroke='#111111' stroke-width='0.3'>60</text>
<rect x='1312' y='953.7' width='8' height='1.3' fill='#888888'/>
<text transform='translate(1282.12,958.12) scale(0.9600,1)' font-family='Liberation Sans' font-weight='400' font-size='20.43' fill='#111111' stroke='#111111' stroke-width='0.3'>80</text>
<rect x='1312' y='907.4' width='8' height='1.3' fill='#888888'/>
<text transform='translate(1270.92,911.80) scale(0.9664,1)' font-family='Liberation Sans' font-weight='400' font-size='20.43' fill='#111111' stroke='#111111' stroke-width='0.3'>100</text>
<rect x='1312' y='861.1' width='8' height='1.3' fill='#888888'/>
<text transform='translate(1270.92,865.48) scale(0.9664,1)' font-family='Liberation Sans' font-weight='400' font-size='20.43' fill='#111111' stroke='#111111' stroke-width='0.3'>120</text>
<rect x='1312' y='814.8' width='8' height='1.3' fill='#888888'/>
<text transform='translate(1270.92,819.16) scale(0.9664,1)' font-family='Liberation Sans' font-weight='400' font-size='20.43' fill='#111111' stroke='#111111' stroke-width='0.3'>140</text>
<rect x='1312' y='768.4' width='8' height='1.3' fill='#888888'/>
<text transform='translate(1270.92,772.84) scale(0.9664,1)' font-family='Liberation Sans' font-weight='400' font-size='20.43' fill='#111111' stroke='#111111' stroke-width='0.3'>160</text>
<rect x='1348.0' y='1088.6' width='40' height='51.0' rx='1.2' fill='url(#gLight)' stroke='#5ec23e' stroke-width='1.4'/>
<rect x='1400.2' y='824.6' width='40' height='315.0' rx='1.2' fill='url(#gDark)' stroke='#2a5e34' stroke-width='1.4'/>
<rect x='1497.7' y='1137.4' width='40' height='2.2' fill='#86c46a'/>
<rect x='1549.9' y='1137.4' width='40' height='2.2' fill='#5e8c66'/>
<rect x='1647.4' y='1137.4' width='40' height='2.2' fill='#86c46a'/>
<rect x='1699.6' y='1137.4' width='40' height='2.2' fill='#5e8c66'/>
<rect x='1797.1' y='1137.4' width='40' height='2.2' fill='#86c46a'/>
<rect x='1849.3' y='1137.4' width='40' height='2.2' fill='#5e8c66'/>
<rect x='1946.8' y='1079.4' width='40' height='60.2' rx='1.2' fill='url(#gLight)' stroke='#5ec23e' stroke-width='1.4'/>
<rect x='1999.0' y='1021.5' width='40' height='118.1' rx='1.2' fill='url(#gDark)' stroke='#2a5e34' stroke-width='1.4'/>
<text transform='translate(1364.17,1170.80) scale(1.0000,1)' font-family='Liberation Sans' font-weight='400' font-size='19.73' fill='#111111' stroke='#111111' stroke-width='0.3'>Inquiry</text>
<text transform='translate(1484.38,1170.80) scale(1.0000,1)' font-family='Liberation Sans' font-weight='400' font-size='19.73' fill='#111111' stroke='#111111' stroke-width='0.3'>Appointments</text>
<text transform='translate(1664.00,1170.80) scale(1.0000,1)' font-family='Liberation Sans' font-weight='400' font-size='20.87' fill='#111111' stroke='#111111' stroke-width='0.3'>Intro 1</text>
<text transform='translate(1814.13,1170.80) scale(1.0000,1)' font-family='Liberation Sans' font-weight='400' font-size='20.57' fill='#111111' stroke='#111111' stroke-width='0.3'>Intro 2</text>
<text transform='translate(1940.39,1170.80) scale(1.0000,1)' font-family='Liberation Sans' font-weight='400' font-size='19.73' fill='#111111' stroke='#111111' stroke-width='0.3'>New Clients</text>
<rect x='1545.3' y='1199' width='13' height='12.5' fill='#78e04c'/>
<text transform='translate(1569.41,1210.40) scale(1.0000,1)' font-family='Liberation Sans' font-weight='400' font-size='19.45' fill='#111111' stroke='#111111' stroke-width='0.3'>Year Before</text>
<rect x='1683' y='1199' width='13.4' height='12.5' fill='#367342'/>
<text transform='translate(1705.35,1210.40) scale(1.0000,1)' font-family='Liberation Sans' font-weight='400' font-size='20.58' fill='#111111' stroke='#111111' stroke-width='0.3'>Last Year</text>
<text transform='translate(396.34,1295.60) scale(0.9987,1)' font-family='Liberation Sans' font-weight='400' font-size='39.59' fill='#6a5acd' stroke='#6a5acd' stroke-width='0.3'>Financial Performance (Last Year)</text>
<rect x='399' y='1304' width='1728' height='3' fill='#6a5acd'/>
<text transform='translate(660.54,1408.20) scale(0.9709,1)' font-family='Liberation Sans' font-weight='400' font-size='23.56' fill='#7b70d8' stroke='#7b70d8' stroke-width='0.3'>Total Number</text>
<text transform='translate(882.00,1408.20) scale(0.9178,1)' font-family='Liberation Sans' font-weight='400' font-size='24.93' fill='#7b70d8' stroke='#7b70d8' stroke-width='0.3'>Amount</text>
<text transform='translate(397.51,1458.80) scale(1.0000,1)' font-family='Liberation Sans' font-weight='400' font-size='26.16' fill='#7b70d8' stroke='#7b70d8' stroke-width='0.3'>Memberships</text>
<text transform='translate(718.98,1458.80) scale(0.9348,1)' font-family='Liberation Sans' font-weight='400' font-size='27.29' fill='#111111' stroke='#111111' stroke-width='0.3'>531</text>
<text transform='translate(883.34,1458.80) scale(1.0000,1)' font-family='Liberation Sans' font-weight='400' font-size='25.81' fill='#333333' stroke='#333333' stroke-width='0.3'>$18,932.44</text>
<path d='M1095.5,1440.5 L1103.5,1449.3 H1098.8 V1458.8 H1092.2 V1449.3 H1087.5 Z' fill='#2e7d1e'/>
<text transform='translate(1117.19,1458.80) scale(1.0000,1)' font-family='Liberation Sans' font-weight='700' font-size='26.86' fill='#2e7d1e' stroke='#2e7d1e' stroke-width='0.15'>590%</text>
<text transform='translate(397.51,1502.50) scale(1.0000,1)' font-family='Liberation Sans' font-weight='400' font-size='26.16' fill='#7b70d8' stroke='#7b70d8' stroke-width='0.3'>Products</text>
<text transform='translate(717.84,1502.50) scale(0.9907,1)' font-family='Liberation Sans' font-weight='400' font-size='27.29' fill='#111111' stroke='#111111' stroke-width='0.3'>136</text>
<text transform='translate(883.34,1502.50) scale(1.0000,1)' font-family='Liberation Sans' font-weight='400' font-size='25.81' fill='#333333' stroke='#333333' stroke-width='0.3'>$26,634.10</text>
<path d='M1095.5,1484.2 L1103.5,1493.0 H1098.8 V1502.5 H1092.2 V1493.0 H1087.5 Z' fill='#2e7d1e'/>
<text transform='translate(1117.19,1502.50) scale(1.0000,1)' font-family='Liberation Sans' font-weight='700' font-size='26.86' fill='#2e7d1e' stroke='#2e7d1e' stroke-width='0.15'>548%</text>
<text transform='translate(397.39,1546.40) scale(1.0000,1)' font-family='Liberation Sans' font-weight='400' font-size='27.68' fill='#7b70d8' stroke='#7b70d8' stroke-width='0.3'>Events</text>
<text transform='translate(717.90,1546.40) scale(0.9598,1)' font-family='Liberation Sans' font-weight='400' font-size='27.29' fill='#111111' stroke='#111111' stroke-width='0.3'>1011</text>
<text transform='translate(883.34,1546.40) scale(1.0000,1)' font-family='Liberation Sans' font-weight='400' font-size='25.81' fill='#333333' stroke='#333333' stroke-width='0.3'>$243,196.41</text>
<path d='M1095.5,1528.1000000000001 L1103.5,1536.9 H1098.8 V1546.4 H1092.2 V1536.9 H1087.5 Z' fill='#2e7d1e'/>
<text transform='translate(1117.19,1546.40) scale(1.0000,1)' font-family='Liberation Sans' font-weight='700' font-size='26.86' fill='#2e7d1e' stroke='#2e7d1e' stroke-width='0.15'>999+%</text>
<text transform='translate(397.51,1590.30) scale(1.0000,1)' font-family='Liberation Sans' font-weight='400' font-size='26.16' fill='#7b70d8' stroke='#7b70d8' stroke-width='0.3'>Equipments</text>
<text transform='translate(718.67,1590.30) scale(0.9781,1)' font-family='Liberation Sans' font-weight='400' font-size='27.29' fill='#111111' stroke='#111111' stroke-width='0.3'>207</text>
<text transform='translate(883.34,1590.30) scale(1.0000,1)' font-family='Liberation Sans' font-weight='400' font-size='25.81' fill='#333333' stroke='#333333' stroke-width='0.3'>$2,166.41</text>
<path d='M1095.5,1572.0 L1103.5,1580.8 H1098.8 V1590.3 H1092.2 V1580.8 H1087.5 Z' fill='#2e7d1e'/>
<text transform='translate(1117.19,1590.30) scale(1.0000,1)' font-family='Liberation Sans' font-weight='700' font-size='26.86' fill='#2e7d1e' stroke='#2e7d1e' stroke-width='0.15'>999+%</text>
<rect x='399' y='1471.8000000000002' width='811' height='1.3' fill='#dcdcdc'/>
<rect x='399' y='1516.1000000000001' width='811' height='1.3' fill='#dcdcdc'/>
<rect x='399' y='1559.7' width='811' height='1.3' fill='#dcdcdc'/>
<rect x='371.6' y='1439.8' width='21.5' height='21.5' rx='1.5' fill='url(#gExp)' stroke='#b4b9c4' stroke-width='1.1'/>
<path d='M382.3,1444.3 V1456.8 M376.2,1450.5 H388.4' stroke='#a0a5b0' stroke-width='2.2'/>
<rect x='1368' y='1434.2' width='699.9' height='170' fill='#efefef'/>
<rect x='1367.4' y='1375.2' width='1.3' height='230' fill='#a8a8a8'/>
<rect x='1600.7' y='1375.2' width='1.3' height='230' fill='#a8a8a8'/>
<rect x='1834.0' y='1375.2' width='1.3' height='230' fill='#a8a8a8'/>
<rect x='2067.3' y='1375.2' width='1.3' height='230' fill='#a8a8a8'/>
<rect x='1367.2' y='1375.2' width='1.6' height='230' fill='#888888'/>
<rect x='1360' y='1375.4' width='8' height='1.3' fill='#888888'/>
<text transform='translate(1272.39,1379.80) scale(1.0000,1)' font-family='Liberation Sans' font-weight='400' font-size='19.32' fill='#111111' stroke='#111111' stroke-width='0.3'>$350,000</text>
<rect x='1360' y='1428.0' width='8' height='1.3' fill='#888888'/>
<text transform='translate(1272.39,1432.40) scale(1.0000,1)' font-family='Liberation Sans' font-weight='400' font-size='19.32' fill='#111111' stroke='#111111' stroke-width='0.3'>$300,000</text>
<rect x='1360' y='1480.6' width='8' height='1.3' fill='#888888'/>
<text transform='translate(1272.39,1485.00) scale(1.0000,1)' font-family='Liberation Sans' font-weight='400' font-size='19.32' fill='#111111' stroke='#111111' stroke-width='0.3'>$250,000</text>
<rect x='1360' y='1533.2' width='8' height='1.3' fill='#888888'/>
<text transform='translate(1272.39,1537.60) scale(1.0000,1)' font-family='Liberation Sans' font-weight='400' font-size='19.32' fill='#111111' stroke='#111111' stroke-width='0.3'>$200,000</text>
<rect x='1360' y='1585.8' width='8' height='1.3' fill='#888888'/>
<text transform='translate(1272.39,1590.20) scale(1.0000,1)' font-family='Liberation Sans' font-weight='400' font-size='19.32' fill='#111111' stroke='#111111' stroke-width='0.3'>$150,000</text>
<rect x='1963.3' y='1434.7' width='60.5' height='200' rx='1.2' fill='url(#gPurple)' stroke='#5246a6' stroke-width='1.4'/></svg>
</body></html>
